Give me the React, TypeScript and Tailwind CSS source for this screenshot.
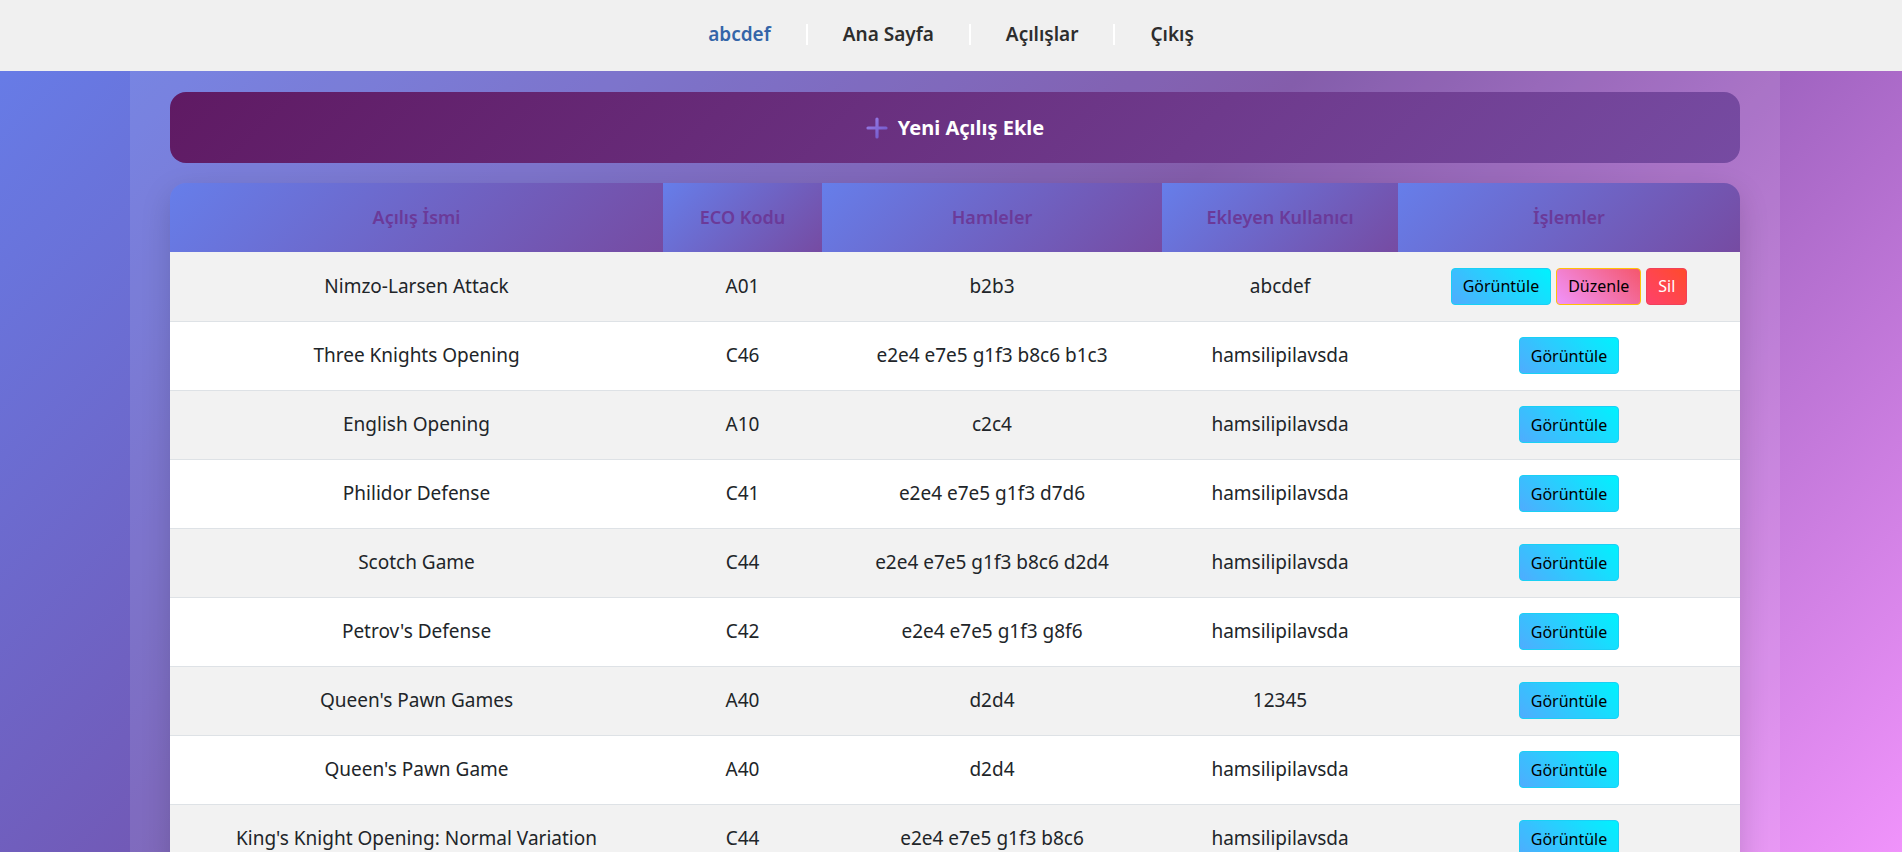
import React from 'react';

type Opening = {
  name: string;
  eco: string;
  moves: string;
  user: string;
  own?: boolean;
};

const openings: Opening[] = [
  { name: 'Nimzo-Larsen Attack', eco: 'A01', moves: 'b2b3', user: 'abcdef', own: true },
  { name: 'Three Knights Opening', eco: 'C46', moves: 'e2e4 e7e5 g1f3 b8c6 b1c3', user: 'hamsilipilavsda' },
  { name: 'English Opening', eco: 'A10', moves: 'c2c4', user: 'hamsilipilavsda' },
  { name: 'Philidor Defense', eco: 'C41', moves: 'e2e4 e7e5 g1f3 d7d6', user: 'hamsilipilavsda' },
  { name: 'Scotch Game', eco: 'C44', moves: 'e2e4 e7e5 g1f3 b8c6 d2d4', user: 'hamsilipilavsda' },
  { name: "Petrov's Defense", eco: 'C42', moves: 'e2e4 e7e5 g1f3 g8f6', user: 'hamsilipilavsda' },
  { name: "Queen's Pawn Games", eco: 'A40', moves: 'd2d4', user: '12345' },
  { name: "Queen's Pawn Game", eco: 'A40', moves: 'd2d4', user: 'hamsilipilavsda' },
  { name: "King's Knight Opening: Normal Variation", eco: 'C44', moves: 'e2e4 e7e5 g1f3 b8c6', user: 'hamsilipilavsda' },
];

const font = { fontFamily: '"Noto Sans", "Open Sans", sans-serif' };

const Separator = () => <span className="mx-[35px] block h-[21px] w-[2px] bg-white" />;

export default function App() {
  return (
    <div
      className="min-h-screen bg-fixed bg-[linear-gradient(135deg,#667eea_0%,#764ba2_50%,#f093fb_100%)]"
      style={font}
    >
      {/* Top navigation */}
      <nav className="flex h-[71px] items-center justify-center bg-[#f0f0f0] pb-[2px] text-[19px] font-semibold text-[#2d2d2d]">
        <span className="text-[#3465a8]">abcdef</span>
        <Separator />
        <a className="cursor-pointer">Ana Sayfa</a>
        <Separator />
        <a className="cursor-pointer">Açılışlar</a>
        <Separator />
        <a className="cursor-pointer">Çıkış</a>
      </nav>

      <main className="ml-[130px] w-[1650px] bg-white/10 px-10 pt-[21px] pb-10">
        <button className="flex h-[71px] w-full items-center justify-center gap-[10px] rounded-2xl bg-[linear-gradient(135deg,#5f1a63,#764ba2)] text-[20px] font-bold text-white">
          <svg width="22" height="22" viewBox="0 0 22 22">
            <defs>
              <linearGradient id="plus" x1="0" y1="0" x2="1" y2="1">
                <stop offset="0" stopColor="#9a7fe8" />
                <stop offset="1" stopColor="#6e55c8" />
              </linearGradient>
            </defs>
            <path d="M11 2v18M2 11h18" stroke="url(#plus)" strokeWidth="3.2" strokeLinecap="round" />
          </svg>
          Yeni Açılış Ekle
        </button>

        <div className="mt-5 overflow-hidden rounded-2xl shadow-[0_10px_30px_rgba(0,0,0,0.15)]">
          <table className="w-full border-collapse text-center text-[19px] text-[#212529]">
            <thead>
              <tr className="h-[69px] text-[18px] text-[#6b3a99]">
                <th className="w-[493px] bg-[linear-gradient(135deg,#667eea,#764ba2)] font-semibold">Açılış İsmi</th>
                <th className="w-[159px] bg-[linear-gradient(135deg,#667eea,#764ba2)] font-semibold">ECO Kodu</th>
                <th className="w-[340px] bg-[linear-gradient(135deg,#667eea,#764ba2)] font-semibold">Hamleler</th>
                <th className="w-[236px] bg-[linear-gradient(135deg,#667eea,#764ba2)] font-semibold">Ekleyen Kullanıcı</th>
                <th className="bg-[linear-gradient(135deg,#667eea,#764ba2)] font-semibold">İşlemler</th>
              </tr>
            </thead>
            <tbody>
              {openings.map((o, i) => (
                <tr
                  key={i}
                  className={`h-[69px] border-b border-[#dee2e6] ${i % 2 === 0 ? 'bg-[#f2f2f2]' : 'bg-white'}`}
                >
                  <td>{o.name}</td>
                  <td>{o.eco}</td>
                  <td>{o.moves}</td>
                  <td>{o.user}</td>
                  <td>
                    <div className="flex items-center justify-center gap-[5px]">
                      <button className="h-[37px] rounded-[4px] border border-[#1ad0f5] bg-[linear-gradient(45deg,#4facfe,#00f2fe)] px-[11px] text-[16px] text-black">
                        Görüntüle
                      </button>
                      {o.own && (
                        <>
                          <button className="h-[37px] rounded-[4px] border border-[#ffc107] bg-[linear-gradient(45deg,#f093fb,#f5576c)] px-[11px] text-[16px] text-black">
                            Düzenle
                          </button>
                          <button className="h-[37px] rounded-[4px] border border-[#f0415a] bg-[linear-gradient(45deg,#ff416c,#ff4b2b)] px-[11px] text-[16px] text-white">
                            Sil
                          </button>
                        </>
                      )}
                    </div>
                  </td>
                </tr>
              ))}
            </tbody>
          </table>
        </div>
      </main>
    </div>
  );
}
